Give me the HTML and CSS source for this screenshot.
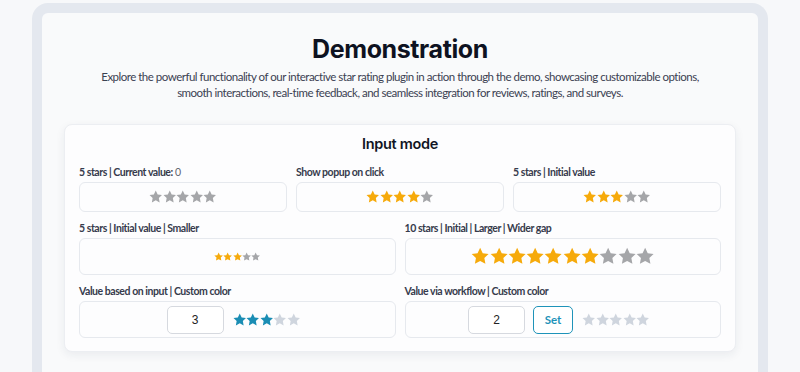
FILE: index.html
```
<!DOCTYPE html>
<html lang="en">
<head>
  <meta charset="UTF-8" />
  <title>Demonstration | Star Rating</title>
  <link rel="stylesheet" href="styles.css">
</head>
<body>
  <svg width="0" height="0" class="defs">
    <defs>
      <path id="star" d="M12 1l3.4 7.1 7.7 1-5.6 5.3 1.4 7.7L12 18.4l-6.9 3.7 1.4-7.7L.9 9.1l7.7-1z"/>
    </defs>
  </svg>

  <div class="frame">
    <section class="demo">
      <h1>Demonstration</h1>
      <p class="lead">Explore the powerful functionality of our interactive star rating plugin in action through the demo, showcasing customizable options, smooth interactions, real-time feedback, and seamless integration for reviews, ratings, and surveys.</p>

      <div class="card">
        <h2>Input mode</h2>
        <div class="grid">
          <div class="item third">
            <label>5 stars | Current value: <span class="val">0</span></label>
            <div class="box"><div class="stars md" data-value="0" data-max="5"></div></div>
          </div>
          <div class="item third">
            <label>Show popup on click</label>
            <div class="box"><div class="stars md" data-value="4" data-max="5"></div></div>
          </div>
          <div class="item third">
            <label>5 stars | Initial value</label>
            <div class="box"><div class="stars md" data-value="3" data-max="5"></div></div>
          </div>
          <div class="item half">
            <label>5 stars | Initial value | Smaller</label>
            <div class="box tall"><div class="stars sm" data-value="3" data-max="5"></div></div>
          </div>
          <div class="item half">
            <label>10 stars | Initial | Larger | Wider gap</label>
            <div class="box tall"><div class="stars lg" data-value="7" data-max="10"></div></div>
          </div>
          <div class="item half">
            <label>Value based on input | Custom color</label>
            <div class="box tall">
              <input class="num" type="text" value="3" />
              <div class="stars md custom" data-value="3" data-max="5"></div>
            </div>
          </div>
          <div class="item half">
            <label>Value via workflow | Custom color</label>
            <div class="box tall">
              <input class="num" type="text" value="2" />
              <button class="set-btn">Set</button>
              <div class="stars md custom" data-value="0" data-max="5"></div>
            </div>
          </div>
        </div>
      </div>
    </section>
  </div>

<script>
  document.querySelectorAll(".stars").forEach(function (el) {
    const value = parseInt(el.dataset.value, 10);
    const max = parseInt(el.dataset.max, 10);
    let html = "";
    for (let i = 1; i <= max; i++) {
      html += '<svg viewBox="0 0 24 24" class="' + (i <= value ? "on" : "off") + '"><use href="#star"/></svg>';
    }
    el.innerHTML = html;
  });
</script>
</body>
</html>
```

FILE: styles.css
```
body {
  margin: 0;
  background: #f7f8fa;
  font-family: 'Lato', sans-serif;
  color: #373c4d;
}

.defs {
  position: absolute;
}

.frame {
  margin: 3px 32px 0;
  border: 10px solid #e4e8ef;
  border-bottom: none;
  border-radius: 16px 16px 0 0;
  background: #f9fafb;
  height: 400px;
}

.demo {
  padding: 20px 22px 0;
  text-align: center;
}

.demo h1 {
  font-family: 'Inter', sans-serif;
  font-size: 25px;
  font-weight: 700;
  letter-spacing: -0.4px;
  color: #0e1221;
  margin: 0;
  line-height: 32px;
}

.lead {
  max-width: 604px;
  font-size: 11.5px;
  letter-spacing: -0.5px;
  line-height: 16px;
  color: #3b4152;
  margin: 4px auto 0;
}

.card {
  margin-top: 23px;
  background: #fdfdfe;
  border: 1px solid #eceef2;
  border-radius: 8px;
  box-shadow: 0 3px 10px rgba(30, 40, 70, 0.07);
  padding: 9px 14px 13px;
}

.card h2 {
  font-family: 'Inter', sans-serif;
  font-size: 14.5px;
  font-weight: 600;
  letter-spacing: -0.3px;
  color: #111524;
  margin: 0 0 11px;
  line-height: 20px;
}

.grid {
  display: grid;
  grid-template-columns: repeat(6, 1fr);
  column-gap: 9px;
  row-gap: 9px;
  text-align: left;
}

.third {
  grid-column: span 2;
}

.half {
  grid-column: span 3;
}

.item label {
  display: block;
  font-size: 10.5px;
  font-weight: 700;
  letter-spacing: -0.45px;
  line-height: 14px;
  margin-bottom: 3px;
  color: #363b4c;
}

.item label .val {
  font-weight: 400;
  color: #606470;
}

.box {
  height: 28px;
  border: 1px solid #e6e9ee;
  border-radius: 6px;
  background: #fdfdfe;
  display: flex;
  align-items: center;
  justify-content: center;
  gap: 9px;
}

.box.tall {
  height: 35px;
}

.stars {
  display: flex;
}

.stars svg {
  display: block;
}

.stars.md svg {
  width: 13.5px;
  height: 13.5px;
}

.stars.sm svg {
  width: 9.3px;
  height: 9.3px;
}

.stars.lg svg {
  width: 18.3px;
  height: 18.3px;
}

.stars.custom {
  margin-right: 8px;
}

.stars .on {
  fill: #f6aa0b;
}

.stars .off {
  fill: #a5a6a9;
}

.stars.custom .on {
  fill: #1a8db4;
}

.stars.custom .off {
  fill: #cfd5de;
}

.num {
  width: 57px;
  height: 28px;
  box-sizing: border-box;
  border: 1px solid #d6d9df;
  border-radius: 5px;
  background: #fff;
  text-align: center;
  font-family: 'Liberation Sans', sans-serif;
  font-size: 12px;
  color: #222;
  padding: 0;
}

.set-btn {
  width: 40px;
  height: 28px;
  margin-left: -1px;
  border: 1.5px solid #1e93b9;
  border-radius: 5px;
  background: #fff;
  color: #1e93b9;
  font-family: 'Lato', sans-serif;
  font-weight: 700;
  font-size: 11.5px;
  padding: 0;
}
```
